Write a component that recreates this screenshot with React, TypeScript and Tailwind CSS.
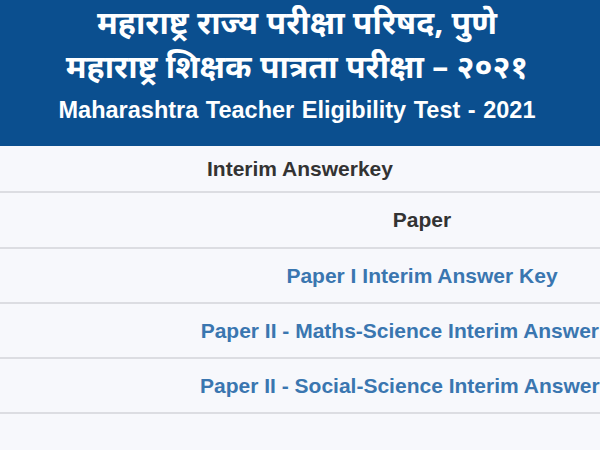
import React from 'react';

const papers = [
  'Paper I Interim Answer Key',
  'Paper II - Maths-Science Interim Answer Key',
  'Paper II - Social-Science Interim Answer Key',
];

export default function App() {
  return (
    <div className="w-[600px] h-[450px] overflow-hidden bg-[#f7f8fc] font-['Liberation_Sans',Arial,sans-serif]">
      {/* Header banner */}
      <div className="h-[146px] bg-[#0b4f8f] text-white text-center flex flex-col items-center pr-[6px]">
        <div className="text-[32px] leading-[44px] font-bold font-['Noto_Sans','Liberation_Sans',sans-serif]">
          महाराष्ट्र राज्य परीक्षा परिषद, पुणे
        </div>
        <div className="text-[32px] leading-[44px] font-bold font-['Noto_Sans','Liberation_Sans',sans-serif]">
          महाराष्ट्र शिक्षक पात्रता परीक्षा – २०२१
        </div>
        <div className="text-[23.5px] leading-[28px] font-bold mt-[8px] [word-spacing:1px]">
          Maharashtra Teacher Eligibility Test - 2021
        </div>
      </div>

      {/* Answer key table */}
      <div className="w-[600px]">
        <div className="h-[47px] flex items-center justify-center text-[21px] font-bold text-[#333333] border-b-2 border-[#dcdde2]">
          Interim Answerkey
        </div>
        <div className="w-[844px]">
          <div className="h-[56px] flex items-center justify-center text-[21px] font-bold text-[#333333] border-b-2 border-[#dcdde2]">
            Paper
          </div>
          {papers.map((p) => (
            <div
              key={p}
              className="h-[55px] flex items-center justify-center text-[21px] font-bold text-[#3a76b0] border-b-2 border-[#dcdde2] whitespace-nowrap"
            >
              {p}
            </div>
          ))}
        </div>
      </div>
    </div>
  );
}
